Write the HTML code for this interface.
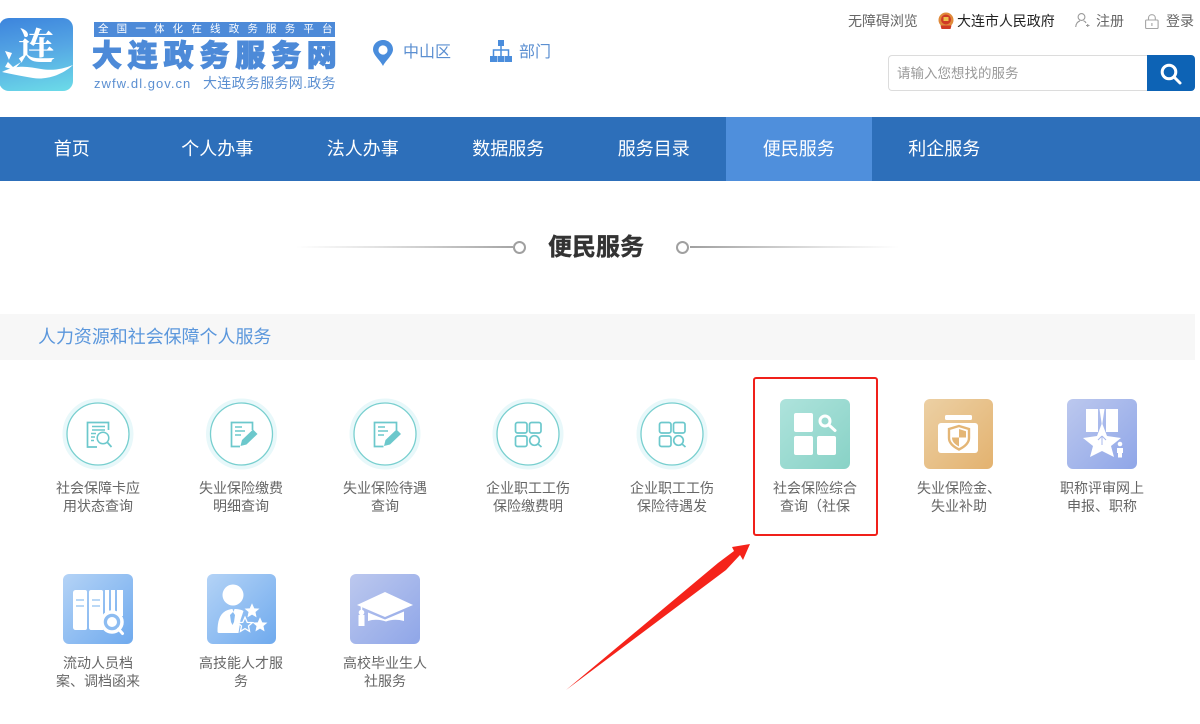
<!DOCTYPE html>
<html lang="zh-CN">
<head>
<meta charset="utf-8">
<title>便民服务</title>
<style>
html,body{margin:0;padding:0;background:#fff}
body{position:relative;width:1200px;height:724px;overflow:hidden;font-family:"Liberation Sans","Noto Sans CJK SC",sans-serif;color:#666}
.a{position:absolute;white-space:nowrap}
svg{position:absolute;display:block;overflow:visible}
.nav{position:absolute;left:0;top:117px;width:1200px;height:64px;background:#2d6fba}
.nav div{position:absolute;top:0;height:64px;line-height:65px;width:145.6px;text-align:center;color:#fff;font-size:18px}
.nav .on{background:#4f8fdc}
.lbl{position:absolute;width:120px;text-align:center;font-size:14px;line-height:18px;color:#666;white-space:nowrap}
.sq{position:absolute;width:70px;height:70px;border-radius:6px;overflow:hidden}
.sq svg{left:0;top:0}
.ci{position:absolute;width:70px;height:70px}
.ci svg{left:0;top:0}
.teal{background:linear-gradient(135deg,#aee3dc,#88d2c6)}
.gold{background:linear-gradient(135deg,#ecd0a4,#e3b26f)}
.purp{background:linear-gradient(135deg,#bcc8ee,#8fa6e8)}
.blue{background:linear-gradient(135deg,#b4d3f6,#6faaee)}
</style>
</head>
<body>

<!-- Logo -->
<div class="a" style="left:-1px;top:18px;width:74px;height:73px;border-radius:10px;overflow:hidden;background:linear-gradient(170deg,#3c84dd 0%,#55a6e4 45%,#6cdce8 100%)">
  <div class="a" style="left:19px;top:-5px;font:700 37px/60px 'Noto Serif CJK SC',serif;color:#fff">连</div>
  <svg width="74" height="73" viewBox="0 0 74 73">
    <path d="M3 54 C18 46 30 49 42 51 C54 53 64 51 74 47 C62 58 46 62 34 60 C22 58 12 56 3 54Z" fill="#fff"/>
    <path d="M6 33 L13 35 L9 44 L14 49 L22 44 L15 52 L6 49 L10 42Z" fill="#fff"/>
  </svg>
</div>

<!-- Site title -->
<div class="a" style="left:94px;top:22px;width:241px;height:15px;background:#4d8ad8"></div>
<div class="a" style="left:98px;top:22px;color:#fff;font-size:10.5px;line-height:15px;letter-spacing:8.17px">全国一体化在线政务服务平台</div>
<div class="a" style="left:92px;top:38px;font-size:30px;line-height:38px;font-weight:900;color:#4d8ad8;letter-spacing:5.8px;-webkit-text-stroke:1px #4d8ad8">大连政务服务网</div>
<div class="a" style="left:94px;top:76px;font-size:13px;line-height:16px;color:#5b8fd1;letter-spacing:1.03px">zwfw.dl.gov.cn</div>
<div class="a" style="left:203px;top:75px;font-size:14px;line-height:16px;color:#5b8fd1;letter-spacing:.3px">大连政务服务网.政务</div>

<!-- Location -->
<svg style="left:373px;top:40px" width="20" height="26" viewBox="0 0 20 26">
  <path d="M10 26 C7 20 0 15 0 9.5 C0 4 4.5 0 10 0 S20 4 20 9.5 C20 15 13 20 10 26Z" fill="#4a8ddc"/>
  <circle cx="10" cy="10" r="4.6" fill="#fff"/>
</svg>
<div class="a" style="left:403px;top:43px;font-size:16px;line-height:20px;color:#5b8fd1">中山区</div>
<svg style="left:490px;top:40px" width="22" height="22" viewBox="0 0 22 22" fill="#4a8ddc">
  <rect x="8" y="0" width="6" height="6"/>
  <rect x="0" y="16" width="7" height="6"/><rect x="7.500" y="16" width="7" height="6"/><rect x="15" y="16" width="7" height="6"/>
  <path d="M11 6V16M3.500 16V10H18.500V16" fill="none" stroke="#4a8ddc" stroke-width="1.500"/>
</svg>
<div class="a" style="left:519px;top:43px;font-size:16px;line-height:20px;color:#5b8fd1">部门</div>

<!-- Top links -->
<div class="a" style="left:848px;top:12px;font-size:14px;line-height:18px;color:#666;letter-spacing:-.05px">无障碍浏览</div>
<svg style="left:938px;top:12px" width="16" height="18" viewBox="0 0 16 18">
  <circle cx="8" cy="8" r="7.500" fill="#e08a3a"/>
  <circle cx="8" cy="7.500" r="5" fill="#cf3a25"/>
  <rect x="5.500" y="5" width="5" height="4" fill="#eec04d"/>
  <path d="M2.500 13.500h11l-1 3.500h-9z" fill="#cf3a25"/>
</svg>
<div class="a" style="left:957px;top:12px;font-size:14px;line-height:18px;color:#222;letter-spacing:-.05px">大连市人民政府</div>
<svg style="left:1075px;top:13px" width="15" height="15" viewBox="0 0 15 15" fill="none" stroke="#9a9a9a" stroke-width="1.100">
  <circle cx="6.500" cy="4" r="3.400"/>
  <path d="M.7 14 C1 10 3 8.500 5 7.800M8.500 7.800 C9.500 8.200 10.500 9 11 10M11 12.500h3.500M12.700 11v3"/>
</svg>
<div class="a" style="left:1096px;top:12px;font-size:14px;line-height:18px;color:#666">注册</div>
<svg style="left:1145px;top:14px" width="14" height="15" viewBox="0 0 14 15" fill="none" stroke="#a5a5a5" stroke-width="1.100">
  <rect x=".6" y="6" width="12.500" height="8.500" rx="1"/>
  <path d="M3.500 6V4 C3.500 2 5 .7 6.900 .7S10.300 2 10.300 4V6M6.900 9v3"/>
</svg>
<div class="a" style="left:1166px;top:12px;font-size:14px;line-height:18px;color:#666">登录</div>

<!-- Search -->
<div class="a" style="left:888px;top:55px;width:258px;height:34px;border:1px solid #dcdcdc;border-right:0;border-radius:4px 0 0 4px"></div>
<div class="a" style="left:897px;top:65px;font-size:13.500px;line-height:18px;color:#999">请输入您想找的服务</div>
<div class="a" style="left:1147px;top:55px;width:48px;height:36px;background:#0d63b5;border-radius:0 4px 4px 0"></div>
<svg style="left:1160px;top:63px" width="22" height="22" viewBox="0 0 22 22" fill="none" stroke="#fff">
  <circle cx="9" cy="9" r="6.800" stroke-width="3"/>
  <path d="M14 14l6 6" stroke-width="3" stroke-linecap="round"/>
</svg>

<!-- Nav -->
<div class="nav">
  <div style="left:-1px">首页</div>
  <div style="left:144.500px">个人办事</div>
  <div style="left:290px">法人办事</div>
  <div style="left:435.500px">数据服务</div>
  <div style="left:581px">服务目录</div>
  <div class="on" style="left:726px">便民服务</div>
  <div style="left:871.500px">利企服务</div>
</div>

<!-- Title -->
<div class="a" style="left:296px;top:246px;width:217px;height:2px;background:linear-gradient(90deg,#fff,#e4e4e4 35%,#a6a6a6)"></div>
<div class="a" style="left:513px;top:241px;width:9px;height:9px;border:2.500px solid #a0a0a0;border-radius:50%"></div>
<div class="a" style="left:548px;top:232px;font-size:24px;line-height:32px;font-weight:700;color:#333;-webkit-text-stroke:.4px #333">便民服务</div>
<div class="a" style="left:676px;top:241px;width:9px;height:9px;border:2.500px solid #a0a0a0;border-radius:50%"></div>
<div class="a" style="left:690px;top:246px;width:209px;height:2px;background:linear-gradient(90deg,#a0a0a0,#e4e4e4 65%,#fff)"></div>

<!-- Section band -->
<div class="a" style="left:0;top:314px;width:1195px;height:46px;background:#f7f7f7"></div>
<div class="a" style="left:38px;top:325px;font-size:18px;line-height:24px;color:#5b97dc;letter-spacing:-.05px">人力资源和社会保障个人服务</div>

<!-- Row 1 icons: circles -->
<div class="ci" style="left:63px;top:399px"><svg width="70" height="70" viewBox="0 0 70 70" fill="none" stroke="#6cc8cc">
  <circle cx="35" cy="35" r="33.500" stroke="#e8f8fa" stroke-width="4"/>
  <circle cx="35" cy="35" r="31" stroke="#78cfcf" stroke-width="1.300"/>
  <path d="M34 48H24.500V23.500H45.500V31" stroke-width="1.700"/>
  <path d="M29 27.500h13M29 31h13M28 34.500h5M28 38h4M28 41.500h3" stroke-width="1.500"/>
  <circle cx="40" cy="39" r="5.800" stroke-width="1.500"/>
  <path d="M44.500 43.500l4 4.500" stroke-width="1.700"/>
</svg></div>
<div class="ci" style="left:207px;top:399px"><svg width="70" height="70" viewBox="0 0 70 70" fill="none" stroke="#6cc8cc">
  <circle cx="34.500" cy="35" r="33.500" stroke="#e8f8fa" stroke-width="4"/>
  <circle cx="34.500" cy="35" r="31" stroke="#78cfcf" stroke-width="1.300"/>
  <path d="M33 47.500H24.500V23.500H45.500V31" stroke-width="1.700"/>
  <path d="M28 28h7M28 32h10M28 36h6" stroke-width="1.500"/>
  <path d="M33.500 47l1.500-6L46 30.500l4.500 4.500L39.500 45.500Z" fill="#6cc8cc" stroke="none"/>
</svg></div>
<div class="ci" style="left:351px;top:399px"><svg width="70" height="70" viewBox="0 0 70 70" fill="none" stroke="#6cc8cc">
  <circle cx="34" cy="35" r="33.500" stroke="#e8f8fa" stroke-width="4"/>
  <circle cx="34" cy="35" r="31" stroke="#78cfcf" stroke-width="1.300"/>
  <path d="M32.500 47.500H23.500V23.500H45.500V31" stroke-width="1.700"/>
  <path d="M27 28h7M27 32h10M27 36h6" stroke-width="1.500"/>
  <path d="M33 47l1.500-6L45.500 30.500l4.500 4.500L39 45.500Z" fill="#6cc8cc" stroke="none"/>
</svg></div>
<div class="ci" style="left:493px;top:399px"><svg width="70" height="70" viewBox="0 0 70 70" fill="none" stroke="#6cc8cc">
  <circle cx="35" cy="35" r="33.500" stroke="#e8f8fa" stroke-width="4"/>
  <circle cx="35" cy="35" r="31" stroke="#78cfcf" stroke-width="1.300"/>
  <g stroke-width="1.700">
    <rect x="22.500" y="23.500" width="11.500" height="10.500" rx="2"/>
    <rect x="36.500" y="23.500" width="11.500" height="10.500" rx="2"/>
    <rect x="22.500" y="37" width="11.500" height="10.500" rx="2"/>
    <circle cx="41.500" cy="41.500" r="4.800"/>
    <path d="M45 45l3.500 3"/>
  </g>
</svg></div>
<div class="ci" style="left:637px;top:399px"><svg width="70" height="70" viewBox="0 0 70 70" fill="none" stroke="#6cc8cc">
  <circle cx="35" cy="35" r="33.500" stroke="#e8f8fa" stroke-width="4"/>
  <circle cx="35" cy="35" r="31" stroke="#78cfcf" stroke-width="1.300"/>
  <g stroke-width="1.700">
    <rect x="22.500" y="23.500" width="11.500" height="10.500" rx="2"/>
    <rect x="36.500" y="23.500" width="11.500" height="10.500" rx="2"/>
    <rect x="22.500" y="37" width="11.500" height="10.500" rx="2"/>
    <circle cx="41.500" cy="41.500" r="4.800"/>
    <path d="M45 45l3.500 3"/>
  </g>
</svg></div>

<!-- Row 1 icons: squares -->
<div class="sq teal" style="left:780px;top:399px"><svg width="70" height="70" viewBox="0 0 70 70">
  <rect x="14" y="14" width="19" height="19" rx="2" fill="#fff"/>
  <rect x="14" y="37" width="19" height="19" rx="2" fill="#fff"/>
  <rect x="37" y="37" width="19" height="19" rx="2" fill="#fff"/>
  <circle cx="45" cy="22" r="5" fill="none" stroke="#fff" stroke-width="3"/>
  <path d="M49.500 26.500l5.500 5" stroke="#fff" stroke-width="3" stroke-linecap="round"/>
</svg></div>
<div class="sq gold" style="left:924px;top:399px;width:69px"><svg width="69" height="70" viewBox="0 0 69 70">
  <rect x="21" y="16" width="27" height="5" rx="1.500" fill="#fff"/>
  <rect x="14" y="24" width="40" height="30" rx="3" fill="#fff"/>
  <path d="M35 27l10 3v9c0 6-6 9.500-10 11.500-4-2-10-5.500-10-11.500v-9z" fill="none" stroke="#e4b676" stroke-width="2.400"/>
  <path d="M35 30l7 2.200V38.500h-7zM35 38.500V47.500c-3-1.700-7-4-7-9z" fill="#e4b676"/>
</svg></div>
<div class="sq purp" style="left:1067px;top:399px"><svg width="70" height="70" viewBox="0 0 70 70" fill="#fff">
  <path d="M19 10h12v23H19zM39 10h12v23H39zM32.500 10h5l-2.500 17z"/>
  <path d="M35 24L40 37L54 39L44 47L47 58L35 52L23 58L26 47L16 39L30 37Z"/>
  <path d="M35 37l-4 4M35 37l4 4M35 37v9" stroke="#a8b8ec" stroke-width="1" fill="none"/>
  <circle cx="53" cy="45" r="2.300"/>
  <path d="M50 49h6v5h-1v4.500h-4V54h-1z"/>
</svg></div>

<!-- Row 1 labels -->
<div class="lbl" style="left:38px;top:479px">社会保障卡应<br>用状态查询</div>
<div class="lbl" style="left:181px;top:479px">失业保险缴费<br>明细查询</div>
<div class="lbl" style="left:325px;top:479px">失业保险待遇<br>查询</div>
<div class="lbl" style="left:468px;top:479px">企业职工工伤<br>保险缴费明</div>
<div class="lbl" style="left:612px;top:479px">企业职工工伤<br>保险待遇发</div>
<div class="lbl" style="left:755px;top:479px">社会保险综合<br>查询（社保</div>
<div class="lbl" style="left:899px;top:479px">失业保险金、<br>失业补助</div>
<div class="lbl" style="left:1042px;top:479px">职称评审网上<br>申报、职称</div>

<!-- Row 2 icons -->
<div class="sq blue" style="left:63px;top:574px"><svg width="70" height="70" viewBox="0 0 70 70">
  <path d="M10 19c0-2 1-3 3-3h9c1.500 0 2 1 2 2v36c0 1-.5 2-2 2H13c-2 0-3-1-3-3z" fill="#fff"/>
  <path d="M26 18c0-1.500 1-2 2-2h10c1.500 0 2 .5 2 2v38H28c-1 0-2-1-2-2z" fill="#fff"/>
  <path d="M42 16h4v24h-4zM48 16h4v22h-4zM54 16h6v26h-6z" fill="#fff"/>
  <path d="M13 26h8M13 32h8M29 26h8M29 32h8" stroke="#a4cbf4" stroke-width="1.500"/>
  <circle cx="49" cy="48" r="10" fill="#8dbcf1" stroke="#fff" stroke-width="3.500"/>
  <circle cx="49" cy="48" r="5" fill="#fff"/>
  <path d="M55.500 55l4 4.500" stroke="#fff" stroke-width="3" stroke-linecap="round"/>
</svg></div>
<div class="sq blue" style="left:207px;top:574px;width:69px"><svg width="69" height="70" viewBox="0 0 69 70" fill="#fff">
  <circle cx="26" cy="21" r="10.500"/>
  <path d="M12 59c-1 0-1.500-.5-1.500-1.500 0-10 2-17 8-20.500 2-1 5-2 7-2l1 3 1-3c3 0 7 .5 9 2l-3 9-2 13z"/>
  <path d="M26 38l2 3-1 7-1.500 3-1.500-3-1-7z" fill="#89bbf1"/>
  <polygon transform="translate(45 37) scale(1.200)" points="0,-6.500 1.900,-2.200 6.200,-2 2.900,.8 3.800,5.300 0,3 -3.800,5.300 -2.900,.8 -6.200,-2 -1.900,-2.200"/>
  <polygon transform="translate(53 51) scale(1.200)" points="0,-6.500 1.900,-2.200 6.200,-2 2.900,.8 3.800,5.300 0,3 -3.800,5.300 -2.900,.8 -6.200,-2 -1.900,-2.200"/>
  <polygon transform="translate(38 51) scale(1.200)" points="0,-6.500 1.900,-2.200 6.200,-2 2.900,.8 3.800,5.300 0,3 -3.800,5.300 -2.900,.8 -6.200,-2 -1.900,-2.200" fill="#89bbf1" stroke="#fff" stroke-width="1.100"/>
</svg></div>
<div class="sq purp" style="left:350px;top:574px"><svg width="70" height="70" viewBox="0 0 70 70" fill="#fff">
  <path d="M35 18L63 31 35 43 7 31Z"/>
  <path d="M18 38.500L35 45.500 54 37.500V47C47 45 41 45.500 36 47.500 30 45.500 24 45 18 47Z"/>
  <path d="M11.500 32v6" stroke="#fff" stroke-width="1.500"/>
  <circle cx="11.500" cy="38.500" r="2.800"/>
  <path d="M8.500 41h6v11h-6z"/>
</svg></div>

<!-- Row 2 labels -->
<div class="lbl" style="left:38px;top:654px">流动人员档<br>案、调档函来</div>
<div class="lbl" style="left:181px;top:654px">高技能人才服<br>务</div>
<div class="lbl" style="left:325px;top:654px">高校毕业生人<br>社服务</div>

<!-- Red annotation -->
<div class="a" style="left:753px;top:377px;width:121px;height:155px;border:2.500px solid #f0201a;border-radius:3px"></div>
<svg style="left:550px;top:530px" width="220" height="170" viewBox="0 0 220 170">
  <path d="M16 160 L168 33 L184 21 L182 17 L200 14 L193 30 L190 25 L176 40 Z" fill="#f5231a"/>
</svg>

</body>
</html>
